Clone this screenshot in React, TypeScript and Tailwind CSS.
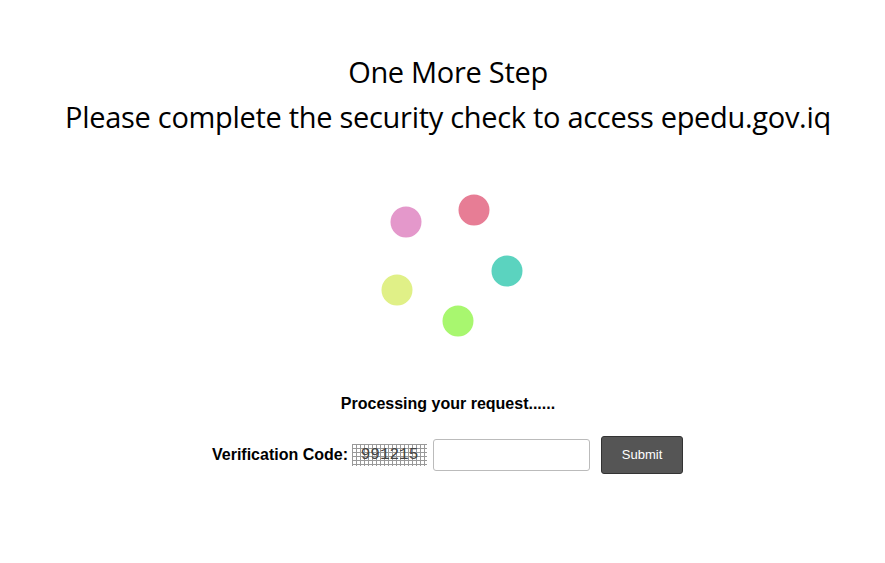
import React from 'react'

const dots = [
    { cx: 405, cy: 222, fill: '#e498cb' },
    { cx: 473, cy: 210, fill: '#e77d95' },
    { cx: 506, cy: 271, fill: '#5bd3bf' },
    { cx: 457, cy: 321, fill: '#a8f76f' },
    { cx: 396, cy: 290, fill: '#e0f087' },
]

const Spinner: React.FC = () => {
    return (
        <svg width="160" height="160" viewBox="370 185 160 160">
            {dots.map(d => (
                <circle key={d.fill} cx={d.cx} cy={d.cy} r="15.5" fill={d.fill} />
            ))}
        </svg>
    )
}

const App: React.FC = () => {
    return (
        <div className="w-[885px] h-[563px] bg-white flex flex-col items-center pl-[11px]">
            <div className="mt-[49px] text-center text-[29px] leading-[45px] text-black font-['Open_Sans','Noto_Sans',sans-serif] tracking-[-0.3px]">
                <div>One More Step</div>
                <div>Please complete the security check to access epedu.gov.iq</div>
            </div>

            <div className="mt-[46px] ml-[5px]">
                <Spinner />
            </div>

            <div className="mt-[47px] font-['Liberation_Sans',Arial,sans-serif] font-bold text-[16px] text-black">
                Processing your request......
            </div>

            <div className="mt-[20px] flex items-center font-['Liberation_Sans',Arial,sans-serif] ml-[-1px]">
                <span className="font-bold text-[16px] text-black">Verification Code:</span>
                <span className="ml-[4px] w-[75px] h-[22px] flex items-center justify-center text-[16px] text-[#444] font-['Liberation_Mono','Courier_New',monospace] bg-[linear-gradient(#999_1px,transparent_1px),linear-gradient(90deg,#999_1px,transparent_1px)] bg-[size:4px_4px]">
                    991215
                </span>
                <input type="text" className="ml-[6px] w-[157px] h-[32px] border border-[#bbb] rounded-[3px] px-2 outline-none" />
                <button className="ml-[11px] w-[82px] h-[38px] bg-[#555] border border-[#333] rounded-[3px] text-white text-[13px] font-['Liberation_Sans',Arial,sans-serif]">
                    Submit
                </button>
            </div>
        </div>
    )
}

export default App
